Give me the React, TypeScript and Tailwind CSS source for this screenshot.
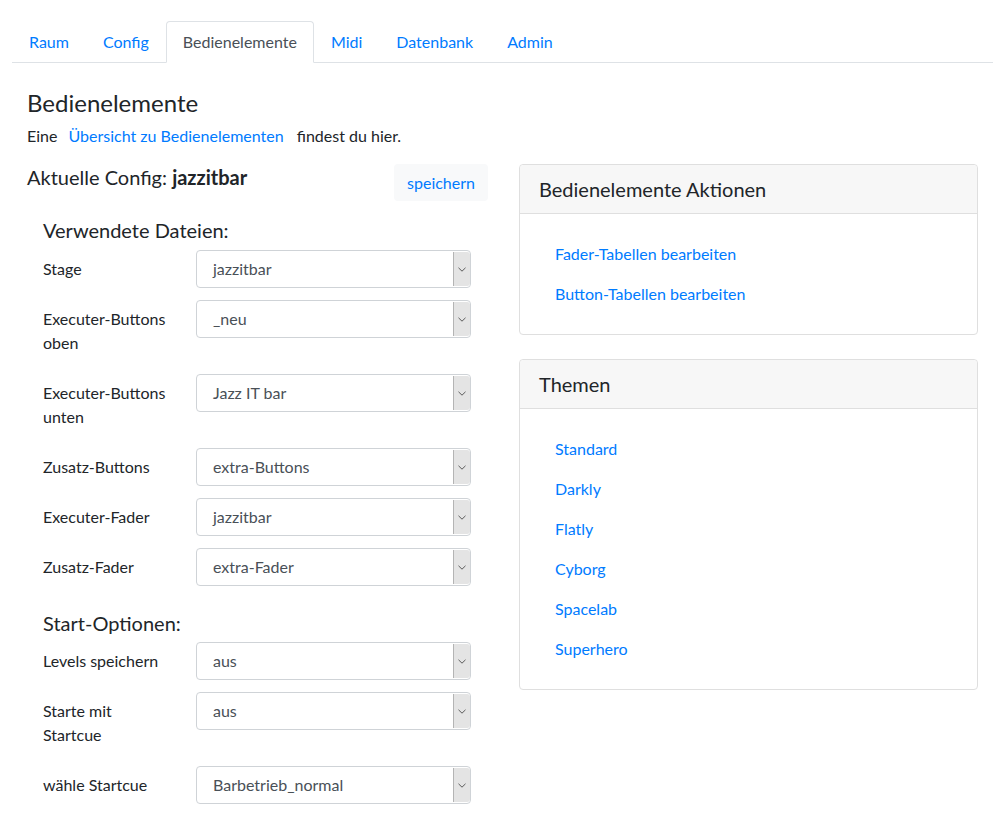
import React from "react";

const tabs = ["Raum", "Config", "Bedienelemente", "Midi", "Datenbank", "Admin"];

function Select({ value }: { value: string }) {
  return (
    <div className="flex h-[38px] w-[275px] shrink-0 items-stretch rounded-[4px] border border-[#cfd3d7] bg-white">
      <div className="flex flex-1 items-center pl-[16px] text-[16px] text-[#495057]">{value}</div>
      <div className="my-[1px] flex w-[17px] items-center justify-center rounded-r-[3px] border-l border-[#b4b4b4] bg-[#e4e4e4]">
        <svg width="8" height="5" viewBox="0 0 8 5" fill="none">
          <path d="M0.5 0.8 L4 4.2 L7.5 0.8" stroke="#5a5a5a" strokeWidth="1" />
        </svg>
      </div>
    </div>
  );
}

function Row({ label, value }: { label: React.ReactNode; value: string }) {
  return (
    <div className="mb-[12px] flex items-start">
      <div className="w-[153px] shrink-0 py-[7px] text-[16px] leading-[24px] text-[#212529]">{label}</div>
      <Select value={value} />
    </div>
  );
}

function Card({ title, links }: { title: string; links: string[] }) {
  return (
    <div className="rounded-[4px] border border-[#dfdfdf] bg-white">
      <div className="flex h-[49px] items-center rounded-t-[4px] border-b border-[#dfdfdf] bg-[#f7f7f7] px-[19px] text-[20px] text-[#212529]">
        {title}
      </div>
      <div className="flex flex-col p-[20px]">
        {links.map((l) => (
          <a key={l} className="flex h-[40px] items-center px-[15px] text-[16px] text-[#007bff]">
            {l}
          </a>
        ))}
      </div>
    </div>
  );
}

export default function App() {
  return (
    <div className="min-h-screen bg-white pl-[12px] pr-[14px] pt-[21px] font-['Lato','Open_Sans',sans-serif] text-[#212529]">
      <nav className="flex border-b border-[#dee2e6]">
        {tabs.map((t) => {
          const active = t === "Bedienelemente";
          return (
            <div
              key={t}
              className={
                active
                  ? "-mb-[1px] rounded-t-[4px] border border-[#dee2e6] border-b-white bg-white px-[16px] py-[8px] text-[16px] leading-[24px] text-[#495057]"
                  : "-mb-[1px] border border-transparent px-[16px] py-[8px] text-[16px] leading-[24px] text-[#007bff]"
              }
            >
              {t}
            </div>
          );
        })}
      </nav>

      <div className="px-[15px]">
        <h3 className="mt-[25px] mb-[7px] text-[24px] leading-[29px] font-normal">Bedienelemente</h3>
        <p className="mb-[16px] text-[16px] leading-[24px]">
          Eine <a className="ml-[7px] mr-[9px] text-[#007bff]">Übersicht zu Bedienelementen</a> findest du hier.
        </p>

        <div className="grid grid-cols-[461px_459px] gap-[31px]">
          <div>
            <div className="flex items-start justify-between">
              <div className="mt-[1px] text-[20px] leading-[24px]">
                Aktuelle Config: <b className="font-bold">jazzitbar</b>
              </div>
              <button className="h-[37px] rounded-[4px] bg-[#f8f9fa] px-[13px] text-[16px] text-[#007bff]">speichern</button>
            </div>

            <div className="pl-[16px]">
              <div className="mt-[17px] mb-[8px] text-[20px] leading-[24px]">Verwendete Dateien:</div>
              <Row label="Stage" value="jazzitbar" />
              <Row label={<>Executer-Buttons<br />oben</>} value="_neu" />
              <Row label={<>Executer-Buttons<br />unten</>} value="Jazz IT bar" />
              <Row label="Zusatz-Buttons" value="extra-Buttons" />
              <Row label="Executer-Fader" value="jazzitbar" />
              <Row label="Zusatz-Fader" value="extra-Fader" />

              <div className="mt-[25px] mb-[7px] text-[20px] leading-[24px]">Start-Optionen:</div>
              <Row label="Levels speichern" value="aus" />
              <Row label={<>Starte mit<br />Startcue</>} value="aus" />
              <Row label="wähle Startcue" value="Barbetrieb_normal" />
            </div>
          </div>

          <div className="flex flex-col gap-[24px]">
            <Card title="Bedienelemente Aktionen" links={["Fader-Tabellen bearbeiten", "Button-Tabellen bearbeiten"]} />
            <Card title="Themen" links={["Standard", "Darkly", "Flatly", "Cyborg", "Spacelab", "Superhero"]} />
          </div>
        </div>
      </div>
    </div>
  );
}
